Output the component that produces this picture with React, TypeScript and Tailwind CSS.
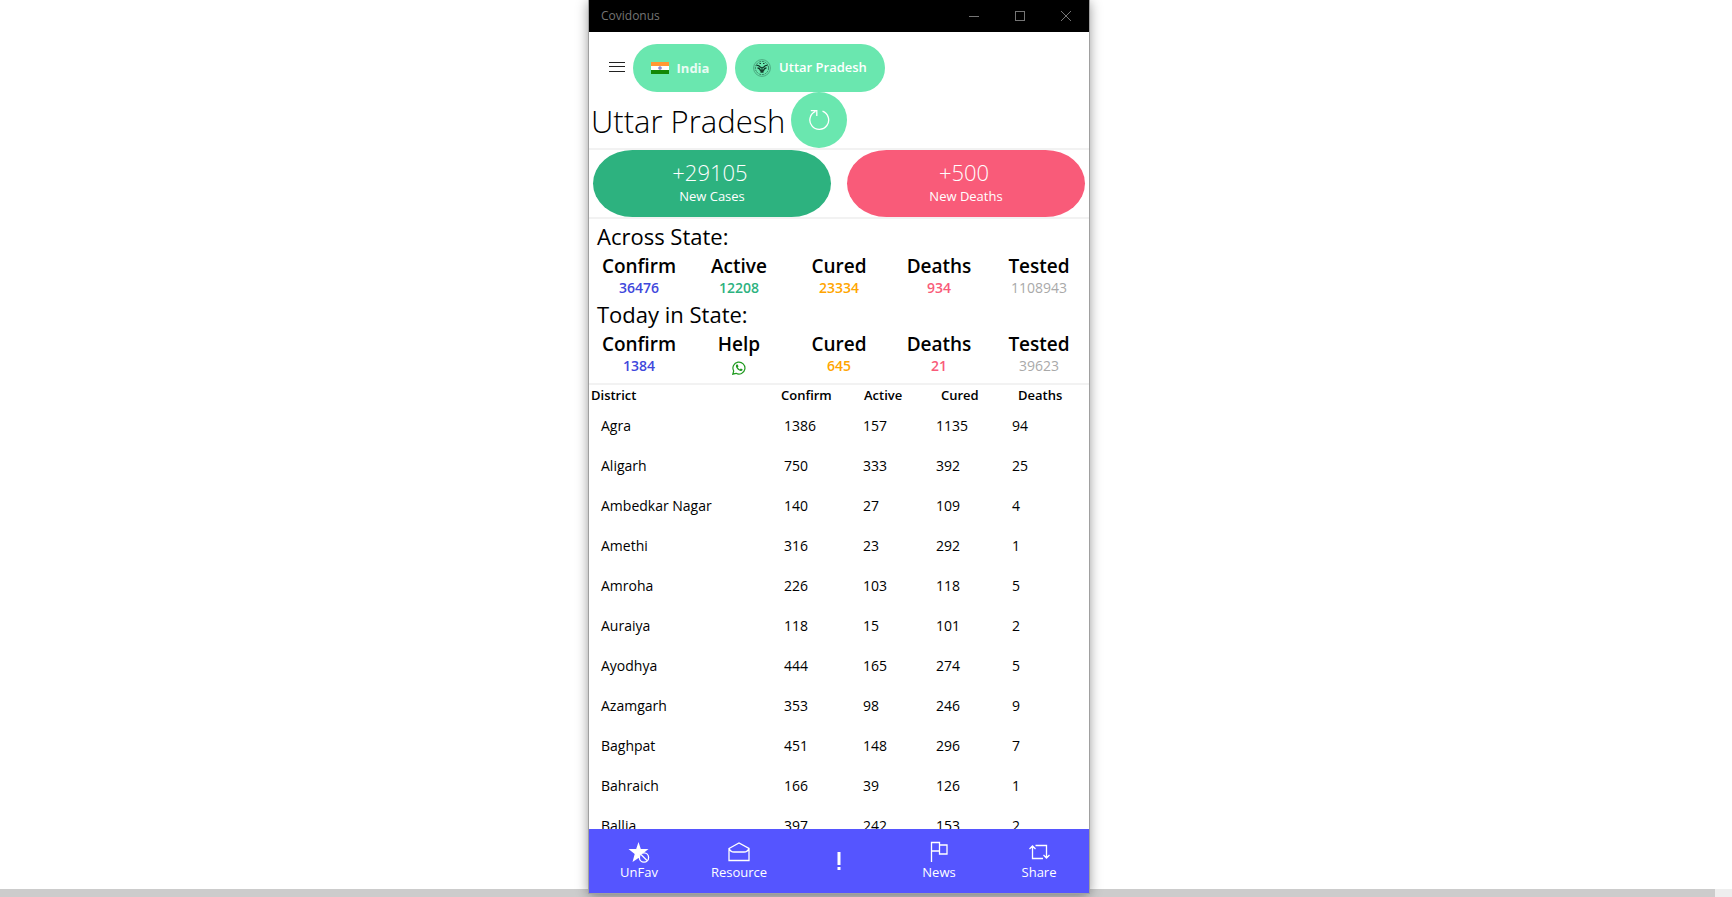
import React from "react";

type Stat = { label: string; value: React.ReactNode; tone: string };

const acrossState: Stat[] = [
  { label: "Confirm", value: "36476", tone: "font-semibold text-[#3f48dc]" },
  { label: "Active", value: "12208", tone: "font-semibold text-[#2db27f]" },
  { label: "Cured", value: "23334", tone: "font-semibold text-[#ffa500]" },
  { label: "Deaths", value: "934", tone: "font-semibold text-[#f95b79]" },
  { label: "Tested", value: "1108943", tone: "text-[#a9a9a9]" },
];

const todayInState: Stat[] = [
  { label: "Confirm", value: "1384", tone: "font-semibold text-[#3f48dc]" },
  { label: "Help", value: <WhatsAppIcon />, tone: "pt-1" },
  { label: "Cured", value: "645", tone: "font-semibold text-[#ffa500]" },
  { label: "Deaths", value: "21", tone: "font-semibold text-[#f95b79]" },
  { label: "Tested", value: "39623", tone: "text-[#a9a9a9]" },
];

const districts: [string, number, number, number, number][] = [
  ["Agra", 1386, 157, 1135, 94],
  ["Aligarh", 750, 333, 392, 25],
  ["Ambedkar Nagar", 140, 27, 109, 4],
  ["Amethi", 316, 23, 292, 1],
  ["Amroha", 226, 103, 118, 5],
  ["Auraiya", 118, 15, 101, 2],
  ["Ayodhya", 444, 165, 274, 5],
  ["Azamgarh", 353, 98, 246, 9],
  ["Baghpat", 451, 148, 296, 7],
  ["Bahraich", 166, 39, 126, 1],
  ["Ballia", 397, 242, 153, 2],
];

function WhatsAppIcon() {
  return (
    <svg viewBox="0 0 14 14" className="h-[14px] w-[14px]" fill="none" stroke="#1f9a1f" aria-hidden="true">
      <path d="M.8 13.2l.9-3.2A6 6 0 1 1 4 12.3z" strokeWidth="1.2" />
      <path d="M4.6 3.6c-1.2 1-.8 2.700.5 4.200 1.400 1.600 3.200 2.700 4.600 2 .8-.4 1-1 .8-1.500L8.800 7.500l-.9.9C7 8 6.200 7.200 5.700 6.200l.8-.8-.8-1.800z" fill="#1f9a1f" stroke="none" />
    </svg>
  );
}

function FlagIcon() {
  return (
    <svg viewBox="0 0 18 12" className="h-3 w-[18px]" aria-hidden="true">
      <rect width="18" height="4" fill="#ff9933" />
      <rect y="4" width="18" height="4" fill="#fff" />
      <rect y="8" width="18" height="4" fill="#128807" />
      <circle cx="9" cy="6" r="1.500" fill="#8f8fd0" stroke="#7777c4" strokeWidth=".5" />
    </svg>
  );
}

function EmblemIcon() {
  return (
    <svg viewBox="0 0 18 18" className="h-[18px] w-[18px]" fill="none" stroke="#143c2c" aria-hidden="true">
      <circle cx="9" cy="9" r="8.400" strokeWidth=".7" opacity=".5" />
      <circle cx="9" cy="9" r="6.600" strokeWidth="1" opacity=".6" strokeDasharray="2 .8" />
      <path d="M3.500 6.500c1.500-.3 2.500 0 3.300 1.200L9 9l2.200-1.300c.8-1.200 1.800-1.500 3.300-1.200M4.500 9c1.500 0 2.500.7 3 2.500h3c.5-1.800 1.500-2.500 3-2.500M9 9v4.500M7.500 13h3" strokeWidth="1.300" />
      <path d="M6.500 4.500h1.500M10 4.500h1.500" strokeWidth="1" />
    </svg>
  );
}

function StatRow({ items }: { items: Stat[] }) {
  return (
    <dl className="grid grid-cols-5 text-center">
      {items.map((item) => (
        <div key={item.label}>
          <dt className="text-[19px] leading-6 font-semibold">{item.label}</dt>
          <dd className={`flex h-5 items-center justify-center text-sm leading-5 ${item.tone}`}>{item.value}</dd>
        </div>
      ))}
    </dl>
  );
}

function NavButton({ label, children }: { label: string; children: React.ReactNode }) {
  return (
    <button type="button" className="flex flex-col items-center justify-center pb-px">
      <svg viewBox="0 0 22 22" className="h-[22px] w-[22px]" fill="none" stroke="currentColor" strokeWidth="1.300" aria-hidden="true">
        {children}
      </svg>
      <span className="text-[13px] leading-[18px]">{label}</span>
    </button>
  );
}

export default function App() {
  return (
    <div className="relative flex h-screen flex-col overflow-hidden bg-white font-['Open_Sans','Noto_Sans',sans-serif] text-sm text-black">
      <div className="grid min-h-0 flex-1 grid-cols-[589fr_500px_643fr]">
        <main className="relative z-10 col-start-2 -mb-1 flex min-h-0 flex-col bg-white shadow-[0_0_0_1px_#a0a0a0,0_2px_12px_rgba(0,0,0,0.45)]">
          <header className="flex h-8 shrink-0 items-center justify-between bg-black pl-3 text-xs text-[#757575]">
            <span>Covidonus</span>
            <div className="flex h-full">
              <button type="button" aria-label="Minimize" className="flex w-[46px] items-center justify-center">
                <svg viewBox="0 0 10 10" className="h-[10px] w-[10px]" stroke="currentColor"><path d="M0 5.500h10" /></svg>
              </button>
              <button type="button" aria-label="Maximize" className="flex w-[46px] items-center justify-center">
                <svg viewBox="0 0 10 10" className="h-[10px] w-[10px]" fill="none" stroke="currentColor"><rect x=".5" y=".5" width="9" height="9" /></svg>
              </button>
              <button type="button" aria-label="Close" className="flex w-[46px] items-center justify-center">
                <svg viewBox="0 0 10 10" className="h-[10px] w-[10px]" stroke="currentColor"><path d="M0 0l10 10M10 0L0 10" /></svg>
              </button>
            </div>
          </header>

          <div className="flex shrink-0 items-center gap-2 pt-3 pl-5">
            <button type="button" aria-label="Menu" className="flex h-12 w-4 items-center pb-[2px]">
              <svg viewBox="0 0 16 10" className="h-[10px] w-4" stroke="#222"><path d="M0 .5h16M0 4.500h16M0 9.500h16" /></svg>
            </button>
            <button type="button" className="flex h-12 w-[94px] items-center justify-center gap-2 rounded-full bg-[#6ae7af] text-[13px] font-bold text-white/85">
              <FlagIcon />
              India
            </button>
            <button type="button" className="flex h-12 w-[150px] items-center justify-center gap-2 rounded-full bg-[#6ae7af] pb-px text-[13px] font-semibold whitespace-nowrap text-white">
              <EmblemIcon />
              Uttar Pradesh
            </button>
          </div>

          <div className="flex h-[58px] shrink-0 items-start gap-2 border-b-2 border-[#f2f2f2] pl-[2px]">
            <h1 className="w-[192px] text-[31px] leading-[58px] font-light whitespace-nowrap">Uttar Pradesh</h1>
            <button type="button" aria-label="Refresh" className="flex h-14 w-14 items-center justify-center rounded-full bg-[#6ae7af] text-white">
              <svg viewBox="0 0 22 22" className="h-[22px] w-[22px]" fill="none" stroke="currentColor" strokeWidth="1.300">
                <path d="M14.500 2.200A9.400 9.400 0 1 1 7.500 2.400M2.800 1.700h6v5.300" />
              </svg>
            </button>
          </div>

          <div className="grid shrink-0 grid-cols-2 gap-4 border-b-2 border-[#f2f2f2] px-1 text-center text-white">
            <section className="flex h-[67px] flex-col items-center justify-start rounded-[40px/34px] bg-[#2db27f] pt-2">
              <p className="pr-1 text-[22px] leading-[28px] font-light">+29105</p>
              <p className="text-[13px] leading-[20px]">New Cases</p>
            </section>
            <section className="flex h-[67px] flex-col items-center justify-start rounded-[40px/34px] bg-[#f95b79] pt-2">
              <p className="pr-1 text-[22px] leading-[28px] font-light">+500</p>
              <p className="text-[13px] leading-[20px]">New Deaths</p>
            </section>
          </div>

          <div className="shrink-0 border-b-2 border-[#f2f2f2] pt-[2px] pb-[7px]">
            <h2 className="mb-[3px] pl-2 text-[22px] leading-[30px]">Across State:</h2>
            <StatRow items={acrossState} />
            <h2 className="mt-px mb-[3px] pl-2 text-[22px] leading-[30px]">Today in State:</h2>
            <StatRow items={todayInState} />
          </div>

          <div className="min-h-0 flex-1 overflow-hidden">
            <table className="w-full table-fixed text-left">
              <thead>
                <tr className="h-[21px]">
                  <th className="w-[192px] pl-[2px] text-[13px] font-semibold">District</th>
                  <th className="w-[82px] text-[13px] font-semibold">Confirm</th>
                  <th className="w-[73px] pl-px text-[13px] font-semibold">Active</th>
                  <th className="w-[76px] pl-[5px] text-[13px] font-semibold">Cured</th>
                  <th className="pl-[6px] text-[13px] font-semibold">Deaths</th>
                </tr>
              </thead>
              <tbody>
                {districts.map(([name, confirm, active, cured, deaths]) => (
                  <tr key={name} className="h-10">
                    <td className="pl-3">{name}</td>
                    <td className="pl-[3px]">{confirm}</td>
                    <td>{active}</td>
                    <td>{cured}</td>
                    <td>{deaths}</td>
                  </tr>
                ))}
              </tbody>
            </table>
          </div>

          <nav className="grid h-16 shrink-0 grid-cols-5 bg-[#5555ff] text-white">
            <NavButton label="UnFav">
              <path d="M10.500 1l2.300 7h7.700l-5 4-1.500 3-1 4-2.500-2-6 4 2.200-8L.5 8h7.700z" fill="currentColor" stroke="none" />
              <circle cx="16" cy="16.500" r="4.600" fill="#5555ff" />
              <path d="M13 13.500l6 6" />
            </NavButton>
            <NavButton label="Resource">
              <path d="M1 7.500l10-5.500 10 5.500V19.500H1zM1 7.500c1 2.500 3 3.500 5 3.500h10c2 0 4-1 5-3.500" />
            </NavButton>
            <button type="button" aria-label="Alerts" className="flex items-center justify-center">
              <svg viewBox="0 0 4 18" className="h-[18px] w-1" fill="currentColor"><path d="M.5 0h3v13h-3zM.5 15h3v3h-3z" /></svg>
            </button>
            <NavButton label="News">
              <path d="M3.500 21V1.500h8V10h-8M11.500 4H19v9h-7.500V10" />
            </NavButton>
            <NavButton label="Share">
              <path d="M1.500 8l3-3 3 3M4.500 5v12.500H15M7.500 4.500h11V17M15.500 14l3 3 3-3" />
            </NavButton>
          </nav>
        </main>
      </div>
      <div className="flex h-2 shrink-0 bg-[#eeeeee]">
        <div className="w-[99%] bg-[#cccccc]" />
      </div>
    </div>
  );
}
